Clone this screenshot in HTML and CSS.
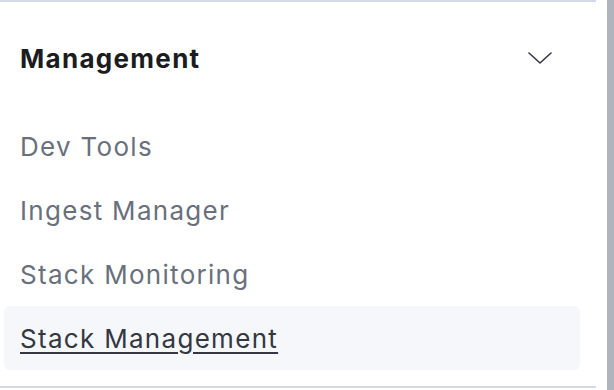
FILE: index.html
```html
<!DOCTYPE html>
<html lang="en">
<head>
    <meta charset="UTF-8">
    <title>Management</title>
    <link rel="stylesheet" href="styles.css">
</head>
<body>
    <div class="frame">
        <nav class="panel">
            <div class="group-header">
                <h2 class="group-title">Management</h2>
                <svg class="chevron" width="24" height="12" viewBox="0 0 24 12" fill="none">
                    <path d="M1 1 L12 11 L23 1" stroke="#343741" stroke-width="1.6" stroke-linecap="round" stroke-linejoin="round"/>
                </svg>
            </div>
            <ul class="nav-list">
                <li><a class="nav-item" href="#">Dev Tools</a></li>
                <li><a class="nav-item" href="#">Ingest Manager</a></li>
                <li><a class="nav-item" href="#">Stack Monitoring</a></li>
                <li><a class="nav-item active" href="#">Stack Management</a></li>
            </ul>
        </nav>
        <div class="scrollbar"></div>
    </div>
</body>
</html>
```

FILE: styles.css
```css
html, body {
    margin: 0;
    padding: 0;
    background: #fff;
    font-family: 'Inter', 'Noto Sans', sans-serif;
}

.frame {
    display: flex;
    height: 390px;
}

.panel {
    width: 596px;
    height: 388px;
    box-sizing: border-box;
    border-top: 2px solid #d3dae6;
    border-bottom: 2px solid #d3dae6;
}

.group-header {
    display: flex;
    align-items: center;
    justify-content: space-between;
    height: 112px;
    padding: 0 44px 0 20px;
}

.group-title {
    margin: 0;
    font-size: 26px;
    font-weight: 700;
    letter-spacing: 0.05em;
    color: #1a1c21;
}

.chevron {
    display: block;
}

.nav-list {
    list-style: none;
    margin: 0;
    padding: 0 16px 0 4px;
}

.nav-item {
    display: flex;
    align-items: center;
    height: 64px;
    padding: 0 16px;
    border-radius: 6px;
    font-size: 26px;
    letter-spacing: 0.05em;
    color: #69707d;
    text-decoration: none;
}

.nav-item.active {
    background: #f5f7fa;
    color: #343741;
    text-decoration: underline;
    text-underline-offset: 4px;
    text-decoration-thickness: 2px;
}

.scrollbar {
    width: 7px;
    margin-left: 11px;
    background: #b0b4bc;
}
```
